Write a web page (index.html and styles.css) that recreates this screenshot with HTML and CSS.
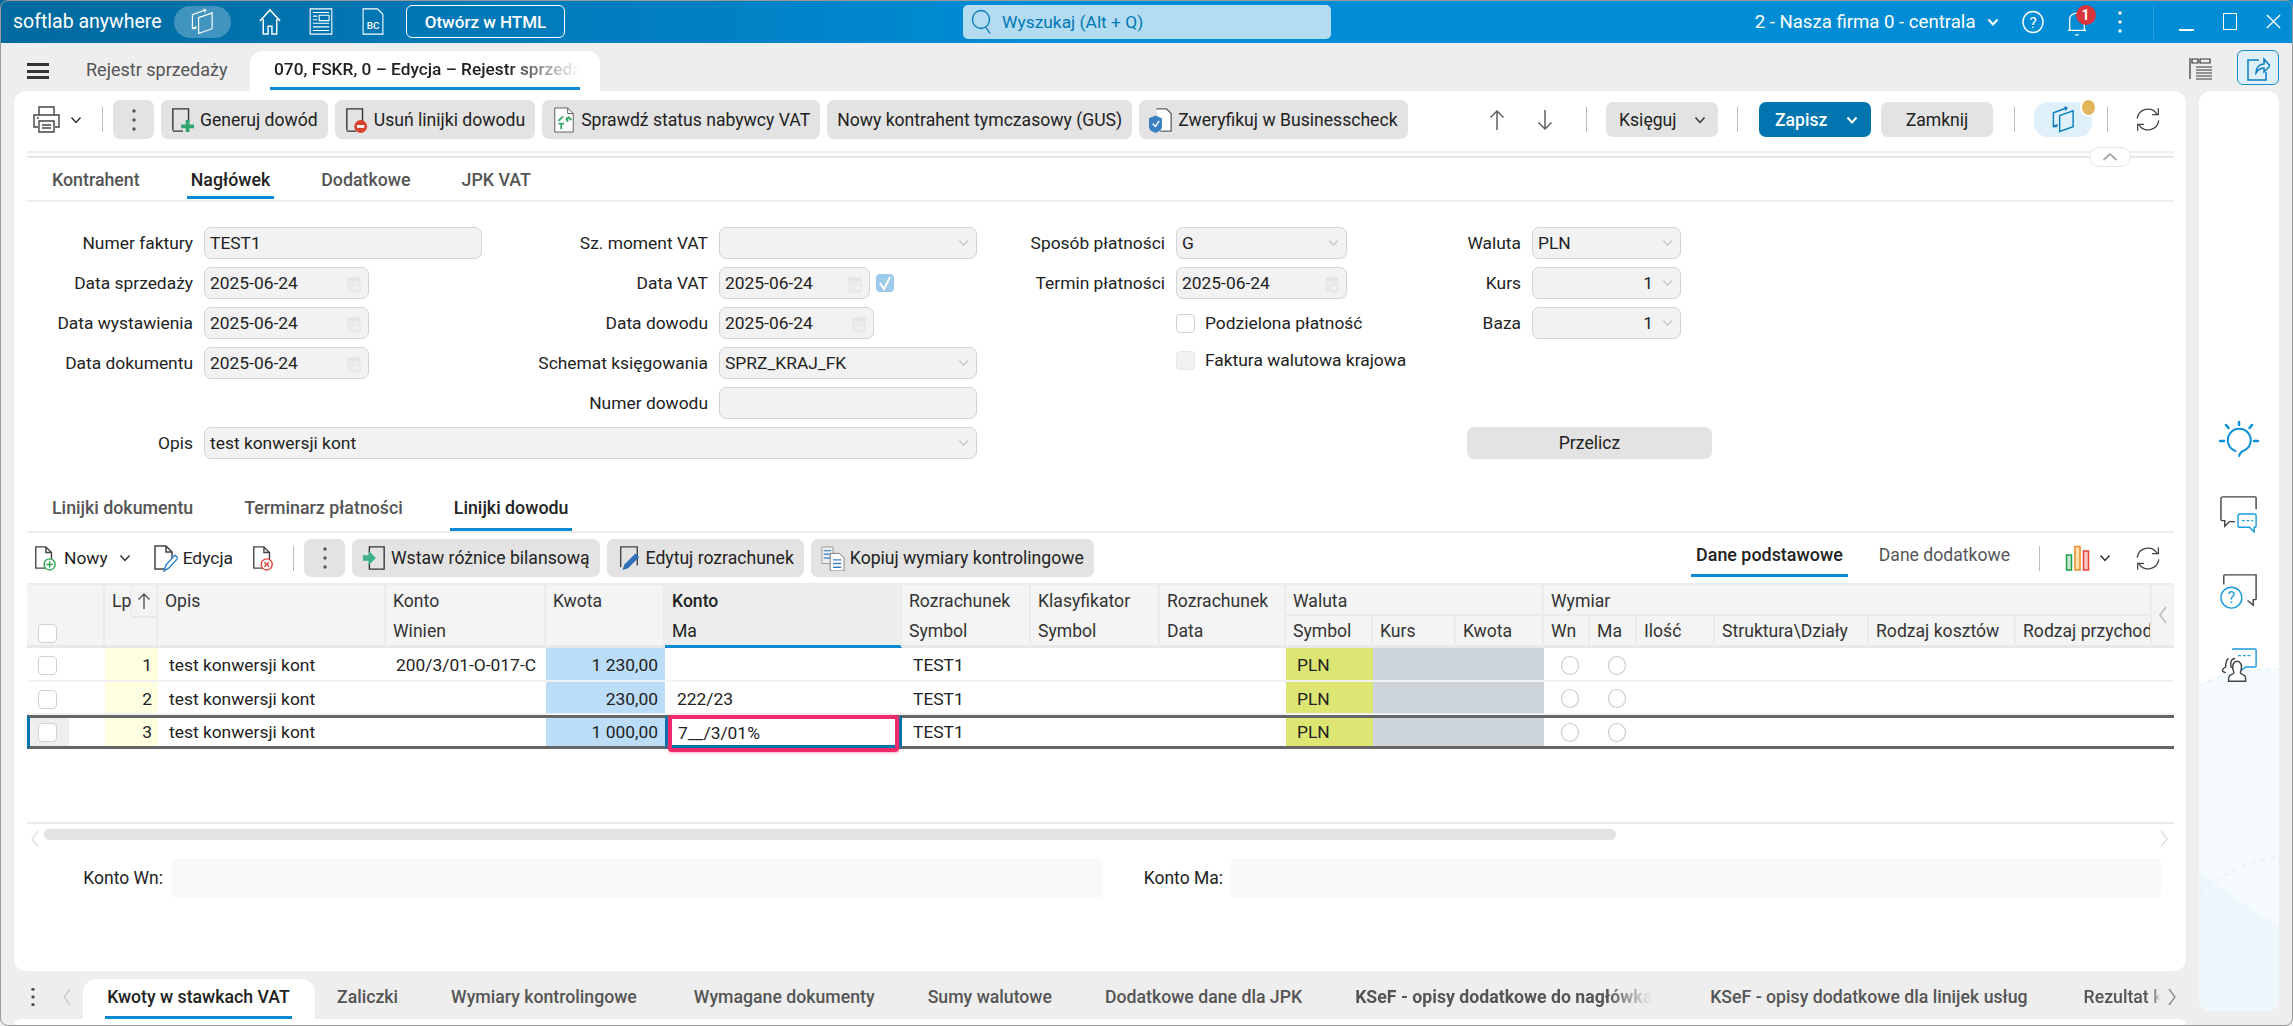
FILE: index.html
```html
<!DOCTYPE html>
<html lang="pl">
<head>
<meta charset="utf-8">
<title>Rejestr sprzedaży</title>
<link rel="stylesheet" href="styles.css">
</head>
<body>
<svg class="defs" aria-hidden="true">
  <symbol id="logo" viewBox="0 0 26 28"><path d="M9 10 23 5V21.500L9 26.500Z M16 2 2.500 7V21L7 19.500 M2 18l1 3.500 3.500-.5 M14 1l2.500 1-1.500 2.500"/></symbol>
  <symbol id="refresh" viewBox="0 0 30 30"><path d="M3 14A12 12 0 0 1 25 9 M26.500 2.500v7h-7 M27 16A12 12 0 0 1 5 21 M3.500 27.500v-7h7"/></symbol>
  <symbol id="chev" viewBox="0 0 12 8"><path d="M1.500 1.500 6 6.500l4.500-5"/></symbol>
  <symbol id="cal" viewBox="0 0 14 18"><path d="M1 3h12v14H1z" fill="#ebebeb" stroke="#e6e6e6"/><path d="M1 3h12v3H1z" fill="#e4e4e4"/><path d="M9 12h2v2H9z" fill="#fff"/></symbol>
  <symbol id="kebab" viewBox="0 0 6 24"><circle cx="3" cy="3" r="1.700"/><circle cx="3" cy="12" r="1.700"/><circle cx="3" cy="21" r="1.700"/></symbol>
  <symbol id="doc" viewBox="0 0 26 28"><path d="M15 25H3V2h11l6 6v8 M14 2v6h6" fill="none" stroke="#444" stroke-width="1.500"/></symbol>
</svg>
<div class="app">
  <header class="titlebar">
    <div class="tb-left">
      <span class="brand">softlab anywhere</span>
      <span class="logo-pill"><svg class="ic-logo-w"><use href="#logo"/></svg></span>
      <svg class="tb-home" viewBox="0 0 24 28"><path d="M1.500 13.500 12 2l10.500 11.500M5 11.500V27h5v-8h4v8h5V11.500"/></svg>
      <svg class="tb-news" viewBox="0 0 26 30"><path d="M1 1h24v28H1zM4 5h18M4 9h5M4 13h5M4 17h18M4 21h18M4 25h18M11 8h11v6H11z"/></svg>
      <svg class="tb-bc" viewBox="0 0 24 30"><path d="M17 1H1v28h22V7z"/><text x="12" y="23" text-anchor="middle" class="bc-text">BC</text></svg>
      <button class="open-html">Otwórz w HTML</button>
    </div>
    <div class="search">
      <svg class="search-ic" viewBox="0 0 22 26"><ellipse cx="10" cy="11" rx="8.500" ry="9"/><path d="M15 19l4 6"/></svg>
      <span>Wyszukaj (Alt + Q)</span>
    </div>
    <div class="tb-right">
      <div class="company"><span>2 - Nasza firma 0 - centrala</span><svg class="chev-w"><use href="#chev"/></svg></div>
      <span class="slot"><svg class="help" viewBox="0 0 22 24"><ellipse cx="11" cy="12" rx="10" ry="10.500"/><text x="11" y="17.500" text-anchor="middle">?</text></svg></span>
      <span class="slot bell-slot"><svg class="bell" viewBox="0 0 22 28"><path d="M3 21V8a8 6 0 0 1 16 0v13M1 21h20M9 26h4"/></svg><b class="badge">1</b></span>
      <span class="slot"><svg class="kebab-w"><use href="#kebab"/></svg></span>
      <span class="tb-sep"></span>
      <span class="slot"><i class="win-min"></i></span>
      <span class="slot"><i class="win-max"></i></span>
      <span class="slot"><svg class="win-close" viewBox="0 0 16 16"><path d="M1 1l14 14M15 1 1 15"/></svg></span>
    </div>
  </header>

  <nav class="pagebar">
    <span class="burger"><i></i><i></i><i></i></span>
    <span class="page-tab">Rejestr sprzedaży</span>
    <div class="page-tab-active"><span class="page-tab-inner"><span class="fade">070, FSKR, 0 – Edycja – Rejestr sprzedaży</span></span></div>
    <svg class="list-ic" viewBox="0 0 24 24"><path d="M1 1v21M3 2h6v4H3zM11 2h10v4H11zM7 10h16M7 13h16M7 16h16M7 19h16M7 22h16"/></svg>
    <span class="share"><svg viewBox="0 0 24 26"><path d="M13 5H2v20h18v-8M10 18c0-6 4-9 8-9V4l6 7-6 6v-4c-4 0-6 2-8 5z"/></svg></span>
  </nav>

  <div class="workspace">
    <div class="left">
      <main class="card">
        <div class="toolbar">
          <svg class="printer" viewBox="0 0 27 27"><path d="M6 9V1h15v8M5 21H1V9h25v12h-4M6 15h15v11H6zM9 19h9M9 22h9M4 12h2" /></svg>
          <svg class="chev-d mini-chev"><use href="#chev"/></svg>
          <span class="sep sep-1"></span>
          <button class="btn btn-kebab"><svg class="kebab-d"><use href="#kebab"/></svg></button>
          <button class="btn"><svg class="ic" viewBox="0 0 26 28"><path d="M2 25V2h17v14M2 26h11" fill="none" stroke="#333" stroke-width="1.500"/><path d="M16 15h4v5h5v4h-5v4h-4v-4h-5v-4h5z" fill="#2fa66f" transform="translate(0 -1)"/></svg>Generuj dowód</button>
          <button class="btn"><svg class="ic" viewBox="0 0 26 28"><path d="M2 25V2h17v13M2 26h10" fill="none" stroke="#333" stroke-width="1.500"/><circle cx="17" cy="21" r="7" fill="#d8432f"/><path d="M13 19.500h8v3h-8z" fill="#fff"/></svg>Usuń linijki dowodu</button>
          <button class="btn"><svg class="ic" viewBox="0 0 26 28"><path d="M3 27V1h14l6 6v20z" fill="#fff" stroke="#555"/><path d="M17 1v6h6" fill="none" stroke="#555"/><path d="M7 15l5-5M16 11l1 5 M10 24v-6 M7 18h6 M15 14l3-3 3 3" fill="none" stroke="#3aa76d" stroke-width="2"/></svg>Sprawdź status nabywcy VAT</button>
          <button class="btn">Nowy kontrahent tymczasowy (GUS)</button>
          <button class="btn"><svg class="ic" viewBox="0 0 26 28"><path d="M8 2h11l5 5v19H12" fill="#fff" stroke="#666" stroke-width="1.500"/><path d="M7 9l7 3v9c0 4-4 6-7 7-3-1-7-3-7-7v-9z" fill="#3a7fbf"/><path d="M4 18l3 3 4-6" fill="none" stroke="#fff" stroke-width="1.500"/></svg>Zweryfikuj w Businesscheck</button>
          <div class="toolbar-right">
            <svg class="arrow" viewBox="0 0 16 22"><path d="M8 21V2M1.500 8.500 8 2l6.500 6.500"/></svg>
            <svg class="arrow arrow-down" viewBox="0 0 16 22"><path d="M8 1v19M1.500 13.500 8 20l6.500-6.500"/></svg>
            <span class="sep sep-a"></span>
            <button class="btn btn-split">Księguj<svg class="chev-d"><use href="#chev"/></svg></button>
            <span class="sep sep-b"></span>
            <button class="btn btn-primary">Zapisz<svg class="chev-w"><use href="#chev"/></svg></button>
            <button class="btn btn-wide">Zamknij</button>
            <span class="sep sep-c"></span>
            <span class="logo-blue"><svg class="ic-logo-b"><use href="#logo"/></svg><i class="dot"></i></span>
            <span class="sep sep-d"></span>
            <svg class="refresh"><use href="#refresh"/></svg>
          </div>
        </div>
        <div class="rule"><span class="collapse"><svg viewBox="0 0 16 10"><path d="M1.500 8 8 2l6.500 6"/></svg></span></div>

        <div class="tabs tabs-top">
          <span class="tab">Kontrahent</span>
          <span class="tab tab-on">Nagłówek</span>
          <span class="tab">Dodatkowe</span>
          <span class="tab">JPK VAT</span>
        </div>

        <form class="form">
          <label class="lbl">Numer faktury</label><div class="inp inp-w">TEST1</div>
          <label class="lbl">Sz. moment VAT</label><div class="inp inp-sel"><svg class="sel-chev"><use href="#chev"/></svg></div>
          <label class="lbl">Sposób płatności</label><div class="inp inp-sel">G<svg class="sel-chev"><use href="#chev"/></svg></div>
          <label class="lbl">Waluta</label><div class="inp inp-sel">PLN<svg class="sel-chev"><use href="#chev"/></svg></div>

          <label class="lbl">Data sprzedaży</label><div class="inp inp-date">2025-06-24<svg class="cal"><use href="#cal"/></svg></div>
          <label class="lbl">Data VAT</label>
          <div class="vat-cell"><div class="inp inp-date-v">2025-06-24<svg class="cal"><use href="#cal"/></svg></div><span class="chk-on"><svg viewBox="0 0 14 16"><path d="M2 8l4 6 6-12"/></svg></span></div>
          <label class="lbl">Termin płatności</label><div class="inp inp-sel">2025-06-24<svg class="cal"><use href="#cal"/></svg></div>
          <label class="lbl">Kurs</label><div class="inp inp-sel inp-num">1<svg class="sel-chev"><use href="#chev"/></svg></div>

          <label class="lbl">Data wystawienia</label><div class="inp inp-date">2025-06-24<svg class="cal"><use href="#cal"/></svg></div>
          <label class="lbl">Data dowodu</label><div class="inp inp-date-d">2025-06-24<svg class="cal"><use href="#cal"/></svg></div>
          <span></span><div class="chk-row"><span class="chk"></span>Podzielona płatność</div>
          <label class="lbl">Baza</label><div class="inp inp-sel inp-num">1<svg class="sel-chev"><use href="#chev"/></svg></div>

          <label class="lbl">Data dokumentu</label><div class="inp inp-date">2025-06-24<svg class="cal"><use href="#cal"/></svg></div>
          <label class="lbl">Schemat księgowania</label><div class="inp inp-sel">SPRZ_KRAJ_FK<svg class="sel-chev"><use href="#chev"/></svg></div>
          <span></span><div class="chk-row chk-row-up"><span class="chk chk-dis"></span>Faktura walutowa krajowa</div>
          <span></span><span></span>

          <span></span><span></span>
          <label class="lbl">Numer dowodu</label><div class="inp"></div>
          <span></span><span></span><span></span><span></span>

          <label class="lbl">Opis</label><div class="inp inp-sel inp-span">test konwersji kont<svg class="sel-chev"><use href="#chev"/></svg></div>
          <span></span><span></span>
          <button type="button" class="btn przelicz">Przelicz</button>
        </form>

        <div class="tabs tabs-low">
          <span class="tab">Linijki dokumentu</span>
          <span class="tab">Terminarz płatności</span>
          <span class="tab tab-on">Linijki dowodu</span>
        </div>

        <div class="toolbar toolbar-low">
          <svg class="ic-n" viewBox="0 0 26 28"><use href="#doc"/><circle cx="18" cy="21" r="6" fill="#fff" stroke="#2aa84f" stroke-width="1.500"/><path d="M18 17.500v7M14.500 21h7" stroke="#2aa84f" stroke-width="1.500"/></svg>
          <span class="plain plain-n">Nowy</span>
          <svg class="chev-d mini-chev-2"><use href="#chev"/></svg>
          <svg class="ic-e" viewBox="0 0 26 28"><use href="#doc"/><path d="M12 27l2-6L23 11l3 3-9 10z" fill="#fff" stroke="#3b87c9" stroke-width="1.500"/></svg>
          <span class="plain plain-e">Edycja</span>
          <svg class="ic-x" viewBox="0 0 26 28"><use href="#doc"/><circle cx="17" cy="21" r="6" fill="#fff" stroke="#e0433a" stroke-width="1.500"/><path d="M14.500 18.500l5 5M19.500 18.500l-5 5" stroke="#e0433a" stroke-width="1.500"/></svg>
          <span class="sep sep-2"></span>
          <button class="btn btn-kebab btn-kebab-low"><svg class="kebab-d"><use href="#kebab"/></svg></button>
          <button class="btn"><svg class="ic" viewBox="0 0 26 28"><path d="M8 8V2h16v24H8v-6" fill="none" stroke="#333" stroke-width="1.500"/><path d="M1 11h6V6l8 8-8 8v-5H1z" fill="#3fb08a"/></svg>Wstaw różnice bilansową</button>
          <button class="btn"><svg class="ic" viewBox="0 0 26 28"><path d="M4 24V2h18v20" fill="none" stroke="#444" stroke-width="1.500"/><path d="M6 27l2-6L20 9l4 4-12 12z" fill="#2f6fb8"/></svg>Edytuj rozrachunek</button>
          <button class="btn"><svg class="ic" viewBox="0 0 26 28"><path d="M1 2h12v18H1z" fill="#eee" stroke="#999"/><path d="M3 6h8M3 10h8M3 14h8" stroke="#4a90d0" stroke-width="1.500"/><path d="M10 9h10l5 5v14H10z" fill="#fff" stroke="#777"/><path d="M13 16h9M13 20h9M13 24h9" stroke="#3a80c8" stroke-width="1.500"/></svg>Kopiuj wymiary kontrolingowe</button>
          <div class="toolbar-right">
            <span class="view-tab view-on">Dane podstawowe</span>
            <span class="view-tab">Dane dodatkowe</span>
            <span class="sep sep-e"></span>
            <svg class="chart" viewBox="0 0 26 26"><path d="M1.500 10h5v15h-5z" fill="#c9e6cf" stroke="#1fa14a" stroke-width="1.500"/><path d="M10 1.500h5V25h-5z" fill="#fbe0b0" stroke="#ee8a25" stroke-width="1.500"/><path d="M18.500 6h5v19h-5z" fill="#f8c9c9" stroke="#e5403a" stroke-width="1.500"/></svg>
            <svg class="chev-d mini-chev-3"><use href="#chev"/></svg>
            <svg class="refresh refresh-low"><use href="#refresh"/></svg>
          </div>
        </div>

        <table class="grid">
          <colgroup>
            <col class="c42"><col class="c36"><col class="c53"><col class="c228"><col class="c160"><col class="c119"><col class="c237"><col class="c129"><col class="c129"><col class="c126"><col class="c87"><col class="c83"><col class="c88"><col class="c46"><col class="c47"><col class="c78"><col class="c154"><col class="c147"><col class="c136"><col class="c22">
          </colgroup>
          <thead>
            <tr>
              <th rowspan="2" class="th-chk"><span class="chk"></span></th>
              <th rowspan="2" class="last"></th>
              <th rowspan="2" class="th-lp last">Lp<span class="sort"><svg viewBox="0 0 14 18"><path d="M7 17V2M1.500 7.500 7 2l5.500 5.500"/></svg></span></th>
              <th rowspan="2" class="last">Opis</th>
              <th class="nob">Konto</th>
              <th rowspan="2" class="last">Kwota</th>
              <th class="nob hl"><b>Konto</b></th>
              <th class="nob">Rozrachunek</th>
              <th class="nob">Klasyfikator</th>
              <th class="nob">Rozrachunek</th>
              <th colspan="3" class="group">Waluta</th>
              <th colspan="6" class="group">Wymiar</th>
              <th rowspan="2" class="last th-more"><svg viewBox="0 0 10 20"><path d="M8 2 2 10l6 8"/></svg></th>
            </tr>
            <tr>
              <th class="last">Winien</th>
              <th class="last hl hl-on">Ma</th>
              <th class="last">Symbol</th>
              <th class="last">Symbol</th>
              <th class="last">Data</th>
              <th class="last">Symbol</th>
              <th class="last">Kurs</th>
              <th class="last">Kwota</th>
              <th class="last">Wn</th>
              <th class="last">Ma</th>
              <th class="last">Ilość</th>
              <th class="last">Struktura\Działy</th>
              <th class="last">Rodzaj kosztów</th>
              <th class="last clip">Rodzaj przychodów</th>
            </tr>
          </thead>
          <tbody>
            <tr>
              <td class="td-chk"><span class="chk"></span></td><td></td><td class="lp">1</td><td class="txt">test konwersji kont</td><td class="txt-w">200/3/01-O-017-C</td><td class="amt">1 230,00</td><td class="txt-m"></td><td class="txt-r">TEST1</td><td></td><td></td><td class="cur">PLN</td><td class="gray"></td><td class="gray"></td><td class="rad"><i class="radio"></i></td><td class="rad"><i class="radio"></i></td><td></td><td></td><td></td><td></td><td></td>
            </tr>
            <tr>
              <td class="td-chk"><span class="chk"></span></td><td></td><td class="lp">2</td><td class="txt">test konwersji kont</td><td></td><td class="amt">230,00</td><td class="txt-m">222/23</td><td class="txt-r">TEST1</td><td></td><td></td><td class="cur">PLN</td><td class="gray"></td><td class="gray"></td><td class="rad"><i class="radio"></i></td><td class="rad"><i class="radio"></i></td><td></td><td></td><td></td><td></td><td></td>
            </tr>
            <tr class="row-on">
              <td class="td-chk td-first"><span class="chk"></span></td><td></td><td class="lp">3</td><td class="txt">test konwersji kont</td><td></td><td class="amt">1 000,00</td><td class="td-edit"><div class="edit">7__/3/01%</div></td><td class="txt-r">TEST1</td><td></td><td></td><td class="cur">PLN</td><td class="gray"></td><td class="gray"></td><td class="rad"><i class="radio"></i></td><td class="rad"><i class="radio"></i></td><td></td><td></td><td></td><td></td><td></td>
            </tr>
          </tbody>
        </table>

        <div class="scrollrow">
          <svg class="sc-chev" viewBox="0 0 10 20"><path d="M8 2 2 10l6 8"/></svg>
          <span class="thumb"></span>
          <svg class="sc-chev sc-chev-r" viewBox="0 0 10 20"><path d="M2 2l6 8-6 8"/></svg>
        </div>

        <div class="konto">
          <span class="konto-l">Konto Wn:</span><span class="konto-f"></span>
          <span class="konto-l konto-l2">Konto Ma:</span><span class="konto-f"></span>
        </div>
      </main>

      <div class="bottombar">
        <svg class="kebab-b"><use href="#kebab"/></svg>
        <svg class="bt-chev" viewBox="0 0 10 20"><path d="M8 2 2 10l6 8"/></svg>
        <span class="bt bt-on"><span class="bt-inner">Kwoty w stawkach VAT</span></span>
        <span class="bt">Zaliczki</span>
        <span class="bt">Wymiary kontrolingowe</span>
        <span class="bt bt-wide">Wymagane dokumenty</span>
        <span class="bt">Sumy walutowe</span>
        <span class="bt">Dodatkowe dane dla JPK</span>
        <span class="bt bt-b"><span class="fade fade-b">KSeF - opisy dodatkowe do nagłówka</span></span>
        <span class="bt bt-far">KSeF - opisy dodatkowe dla linijek usług</span>
        <span class="bt bt-clip">Rezultat księgowania</span>
        <svg class="bt-chev bt-chev-r" viewBox="0 0 10 20"><path d="M2 2l6 8-6 8"/></svg>
      </div>
      <div class="sliver"></div>
    </div>

    <aside class="side">
      <svg class="deco" viewBox="0 0 80 350" preserveAspectRatio="none"><path d="M0 25Q30 8 80 8V350H0Z" fill="#f6fbfe"/><path d="M0 210Q40 240 80 265V350H0Z" fill="#eef7fc"/><path d="M0 25Q30 8 80 8M0 232Q40 200 80 196" fill="none" stroke="#d5ebf8" stroke-dasharray="5 5"/></svg>
      <svg class="side-ic si-bulb" viewBox="0 0 40 38"><g fill="none" stroke="#0a90d8" stroke-width="2" stroke-linecap="round"><path d="M16.500 30A11.500 11.500 0 1 1 24 30c-1.500.5-3 2-4 5"/><path d="M20 1v3M7 4l2.500 3M33 4l-2.500 3M1 20h4M35 20h4" stroke-width="2.500"/></g></svg>
      <svg class="side-ic si-chat" viewBox="0 0 40 40"><g fill="none" stroke-width="1.500"><path d="M38 15V3q0-1-1-1H3Q1 2 1 4v22q0 1 2 1h2v6l5-5h6" stroke="#444"/><path d="M19 22q0-2 2-2h15q2 0 2 2v10q0 2-2 2v5l-5-5H21q-2 0-2-2z" stroke="#1b9bdc" fill="#fff"/><path d="M23 27h12" stroke="#1b9bdc" stroke-dasharray="3 2"/></g></svg>
      <svg class="side-ic si-help" viewBox="0 0 40 40"><g fill="none" stroke-width="1.500"><path d="M4 12V3q0-1 1-1h33v25q0 1-1 1h-2v6l-6-5" stroke="#444"/><circle cx="12" cy="26" r="11" stroke="#1b9bdc" fill="#fff"/><text x="12" y="32" text-anchor="middle" class="q">?</text></g></svg>
      <svg class="side-ic si-ppl" viewBox="0 0 40 40"><g fill="none" stroke-width="1.500"><path d="M13 2q0-1 1-1h23q1 0 1 1v17q0 1-1 1H27l-5 4v-4" stroke="#1b9bdc"/><path d="M19 8h14" stroke="#1b9bdc" stroke-dasharray="3 2"/><path d="M12 21c-2-6 0-10 4-10M6 26c-4-1-5-3 0-6 0-4 0-7 3-9" stroke="#444" fill="none"/><path d="M14 24c-2-7 1-10 4-10s6 3 4 10c-1 2-1 3 2 4 3 1 3 3 3 7H9c0-4 0-6 3-7 3-1 3-2 2-4z" stroke="#444" fill="#fff"/></g></svg>
    </aside>
  </div>
</div>
</body>
</html>
```

FILE: styles.css
```css
* { box-sizing: border-box; }
html, body { margin: 0; padding: 0; background: #fff; }
body { font-family: Roboto, "Liberation Sans", sans-serif; font-size: 17.4px; color: #222; }
.defs { position: absolute; width: 0; height: 0; }
svg { display: block; flex: none; }
button { font: inherit; color: inherit; border: 0; }

.app { position: relative; width: 2293px; height: 1026px; overflow: hidden; background: #eee; display: flex; flex-direction: column; }
.app::after { content: ""; position: absolute; inset: 0; border: 1px solid #999; border-radius: 8px; pointer-events: none; }

/* title bar */
.titlebar { height: 43px; flex: none; display: flex; align-items: center; color: #fff; background: linear-gradient(90deg, #006a9f 0, #0082c6 33%, #008dd5 45%); }
.tb-left { width: 963px; display: flex; align-items: center; }
.brand { margin-left: 13px; width: 148px; font-size: 19.5px; white-space: nowrap; }
.logo-pill { margin-left: 13px; width: 57px; height: 32px; border-radius: 16px; background: rgba(255,255,255,.25); display: flex; align-items: center; justify-content: center; }
.ic-logo-w { width: 25px; height: 27px; fill: none; stroke: #fff; stroke-width: 1.2; }
.tb-home, .tb-news, .tb-bc { fill: none; stroke: #fff; stroke-width: 1.5; height: 27px; }
.tb-home { margin-left: 27px; width: 24px; }
.tb-news { margin-left: 26px; width: 26px; stroke-width: 1.2; }
.tb-bc { margin-left: 27px; width: 24px; stroke-width: 1.2; }
.bc-text { font-family: Roboto, sans-serif; font-size: 11px; font-weight: 500; fill: #fff; stroke: none; }
.open-html { margin-left: 21px; width: 159px; height: 33px; border: 1.5px solid #fff; border-radius: 6px; background: transparent; color: #fff; font-size: 17px; font-weight: 500; }
.search { width: 368px; height: 34px; border-radius: 5px; background: #b3dcf2; color: #0078b4; display: flex; align-items: center; gap: 9px; padding-left: 8px; }
.search-ic { width: 22px; height: 27px; fill: none; stroke: #0078b4; stroke-width: 1.3; }
.tb-right { flex: 1; display: flex; justify-content: flex-end; align-items: center; gap: 19.5px; padding-right: 8px; }
.company { display: flex; align-items: center; gap: 11px; margin-right: 3px; font-size: 18.6px; white-space: nowrap; }
.chev-w { width: 12px; height: 8px; fill: none; stroke: #fff; stroke-width: 2; }
.slot { position: relative; width: 24px; height: 30px; display: flex; align-items: center; justify-content: center; }
.help { width: 22px; height: 24px; fill: none; stroke: #fff; stroke-width: 1.4; }
.help text { fill: #fff; stroke: none; font-size: 15px; font-family: Roboto, sans-serif; }
.bell { width: 20px; height: 26px; margin-top: 5px; fill: none; stroke: #fff; stroke-width: 1.4; }
.badge { position: absolute; left: 11px; top: -2px; width: 20px; height: 20px; border-radius: 50%; background: #d8343b; color: #fff; font-size: 14px; line-height: 20px; text-align: center; }
.kebab-w { width: 6px; height: 24px; fill: #fff; }
.tb-sep { width: 1px; height: 34px; margin: 0 1px; background: #2b9fdc; }
.win-min { width: 15px; height: 2px; margin-top: 16px; background: #fff; }
.win-max { width: 14px; height: 17px; border: 1.5px solid #fff; }
.win-close { width: 15px; height: 15px; fill: none; stroke: #fff; stroke-width: 1.4; }

/* page bar */
.pagebar { height: 48px; flex: none; display: flex; align-items: flex-end; position: relative; }
.burger { margin: 0 0 12px 27px; width: 22px; height: 16px; display: flex; flex-direction: column; justify-content: space-between; }
.burger i { height: 3px; background: #333; }
.page-tab { margin: 0 0 11px 37px; width: 164px; color: #555; font-size: 18px; line-height: 20px; white-space: nowrap; }
.page-tab-active { width: 350px; height: 40px; padding: 0 20px; background: #fff; border-radius: 12px 12px 0 0; }
.page-tab-inner { display: block; height: 39px; line-height: 36px; padding-left: 4px; border-bottom: 3px solid #0a8ad2; overflow: hidden; font-size: 17.3px; font-weight: 500; white-space: nowrap; color: #222; }
.fade { display: block; width: 306px; overflow: hidden; -webkit-mask-image: linear-gradient(90deg, #000 76%, transparent 100%); mask-image: linear-gradient(90deg, #000 76%, transparent 100%); }
.list-ic { margin: 0 0 10px auto; width: 24px; height: 24px; fill: none; stroke: #333; stroke-width: 1.2; }
.share { margin: 0 14px 6px 24px; width: 42px; height: 35px; border: 1.5px solid #1a8ccc; border-radius: 6px; background: #e0f0fa; display: flex; align-items: center; justify-content: center; }
.share svg { width: 24px; height: 26px; fill: none; stroke: #0a7fc0; stroke-width: 1.5; }

/* workspace */
.workspace { flex: 1; display: flex; min-height: 0; }
.left { width: 2186px; padding-left: 14px; display: flex; flex-direction: column; }
.card { height: 880px; flex: none; background: #fff; border-radius: 12px; padding: 9px 12px 0 13px; }
.side { position: relative; overflow: hidden; margin-left: 13px; width: 80px; height: 920px; border-radius: 12px; background: #fff; display: flex; flex-direction: column; align-items: center; }
.deco { position: absolute; left: 0; bottom: 0; width: 80px; height: 350px; }
.side-ic { position: relative; width: 40px; height: 38px; }
.si-bulb { margin-top: 330px; }
.si-chat { margin-top: 36px; }
.si-help { margin-top: 40px; }
.si-ppl { margin-top: 37px; }
.q { fill: #1b9bdc; stroke: none; font-size: 17px; font-family: Roboto, sans-serif; }

/* toolbar */
.toolbar { height: 39px; display: flex; align-items: center; padding-left: 6px; }
.toolbar-right { margin-left: auto; display: flex; align-items: center; height: 100%; }
.printer { width: 27px; height: 27px; fill: none; stroke: #444; stroke-width: 1.4; }
.chev-d { width: 12px; height: 8px; fill: none; stroke: #333; stroke-width: 1.5; }
.mini-chev { margin-left: 10px; }
.sep { width: 1px; height: 25px; background: #bbb; flex: none; }
.sep-1 { margin-left: 20px; }
.btn { height: 39px; padding: 0 10px; border-radius: 7px; background: #e3e3e3; display: inline-flex; align-items: center; gap: 5px; margin-left: 7px; font-size: 17.6px; white-space: nowrap; color: #222; }
.btn-kebab { width: 41px; justify-content: center; margin-left: 10px; padding: 0; }
.kebab-d { width: 6px; height: 24px; fill: #555; }
.ic { width: 24px; height: 26px; }
.arrow { width: 16px; height: 22px; fill: none; stroke: #555; stroke-width: 1.4; }
.arrow-down { margin-left: 32px; }
.sep-a { margin-left: 33px; }
.btn-split { margin-left: 19px; width: 112px; height: 35px; padding: 0 12px 0 13px; justify-content: space-between; }
.sep-b { margin-left: 19px; }
.btn-primary { margin-left: 21px; width: 112px; height: 35px; background: #0075b0; color: #fff; padding: 0 13px 0 16px; justify-content: space-between; font-weight: 500; }
.btn-wide { margin-left: 10px; width: 112px; height: 35px; justify-content: center; }
.sep-c { margin-left: 21px; }
.logo-blue { position: relative; margin-left: 19px; width: 58px; height: 35px; border-radius: 14px; background: #e0f0fa; display: flex; align-items: center; justify-content: center; }
.ic-logo-b { width: 25px; height: 27px; fill: none; stroke: #0a7fc0; stroke-width: 1.5; }
.dot { position: absolute; right: -3px; top: -2px; width: 13px; height: 15px; border-radius: 50%; background: #e3b65c; box-shadow: 0 0 0 2px #fff; }
.sep-d { margin-left: 15px; }
.refresh { margin: 0 12px 0 26px; width: 28px; height: 27px; fill: none; stroke: #444; stroke-width: 1.4; }
.refresh-low { margin-left: 23px; }

.rule { position: relative; margin-top: 12px; height: 7px; border-top: 2px solid #eee; border-bottom: 2px solid #e6e6e6; }
.collapse { position: absolute; left: 2062px; top: -6px; width: 42px; height: 20px; border: 1px solid #e6e6e6; border-radius: 10px; background: #fff; display: flex; align-items: center; justify-content: center; }
.collapse svg { width: 16px; height: 10px; fill: none; stroke: #aaa; stroke-width: 2; }

/* tabs */
.tabs { display: flex; align-items: flex-end; gap: 43px; padding-left: 21px; border-bottom: 2px solid #eee; }
.tabs-top { height: 44px; }
.tabs-top .tab { margin-bottom: 1px; padding-bottom: 6px; }
.tabs-low { height: 66px; }
.tabs-low .tab { padding-bottom: 10px; }
.tab { padding: 0 4px 6px; line-height: 20px; color: #555; font-weight: 500; font-size: 17.8px; border-bottom: 3px solid transparent; white-space: nowrap; }
.tab-on { color: #222; border-bottom-color: #0a8ad2; }

/* form */
.form { display: grid; grid-template-columns: 177px 278px 237px 258px 199px 171px 185px 149px; grid-template-rows: repeat(6, 40px); padding-top: 25px; }
.lbl { text-align: right; padding-right: 11px; height: 32px; line-height: 32px; white-space: nowrap; color: #222; }
.inp { position: relative; height: 32px; line-height: 30px; padding-left: 5px; background: #f2f2f2; border: 1px solid #d4d4d4; border-radius: 7px; white-space: nowrap; }
.inp-w { width: 278px; }
.inp-date { width: 165px; }
.inp-date-v { width: 151px; }
.inp-date-d { width: 155px; }
.inp-span { grid-column: span 3; }
.inp-num { text-align: right; padding-right: 27px; }
.sel-chev { position: absolute; right: 7px; top: 11px; width: 11px; height: 8px; fill: none; stroke: #bbb; stroke-width: 1.2; }
.cal { position: absolute; right: 7px; top: 7px; width: 14px; height: 18px; }
.vat-cell { display: flex; gap: 6px; align-items: center; height: 32px; }
.chk-on { width: 18px; height: 18px; border-radius: 4px; background: #9bcbe8; display: flex; align-items: center; justify-content: center; }
.chk-on svg { width: 14px; height: 16px; fill: none; stroke: #fff; stroke-width: 2; }
.chk-row { display: flex; align-items: center; gap: 10px; height: 32px; white-space: nowrap; }
.chk-row-up { margin-top: -3px; }
.chk { display: inline-block; flex: none; width: 19px; height: 19px; background: #fff; border: 1.5px solid #d2d2d2; border-radius: 4px; vertical-align: middle; }
.chk-dis { background: #f2f2f2; border-color: #e6e6e6; }
.przelicz { grid-column: span 2; margin-left: 120px; width: 245px; height: 32px; justify-content: center; }

/* lower toolbar */
.toolbar-low { height: 38px; margin: 6px 0; padding-left: 6px; }
.ic-n { width: 24px; height: 28px; }
.plain { white-space: nowrap; }
.plain-n { margin-left: 7px; }
.plain-e { margin-left: 5px; }
.mini-chev-2 { margin-left: 11px; }
.ic-e { margin-left: 21px; width: 26px; height: 28px; }
.ic-x { margin-left: 18px; width: 24px; height: 28px; }
.sep-2 { margin-left: 18px; }
.toolbar-low .btn { height: 38px; }
.view-tab { height: 38px; margin-left: 26px; padding: 0 5px; line-height: 32px; color: #555; font-size: 17.6px; border-bottom: 3px solid transparent; white-space: nowrap; }
.view-on { color: #222; font-size: 17.9px; font-weight: 500; border-bottom-color: #0a8ad2; }
.sep-e { margin-left: 24px; }
.chart { margin-left: 25px; width: 26px; height: 26px; }
.mini-chev-3 { margin-left: 8px; }

/* table */
.grid { width: 2147px; table-layout: fixed; border-collapse: separate; border-spacing: 0; }
.c42 { width: 42px; } .c36 { width: 36px; } .c53 { width: 53px; } .c228 { width: 228px; } .c160 { width: 160px; } .c119 { width: 119px; } .c237 { width: 237px; } .c129 { width: 129px; } .c126 { width: 126px; } .c87 { width: 87px; } .c83 { width: 83px; } .c88 { width: 88px; } .c46 { width: 46px; } .c47 { width: 47px; } .c78 { width: 78px; } .c154 { width: 154px; } .c147 { width: 147px; } .c136 { width: 136px; } .c22 { width: 22px; }
th { background: #f4f4f4; border-right: 2px solid #ebebeb; padding: 0 0 0 7px; font-size: 17.6px; font-weight: 400; text-align: left; height: 32px; vertical-align: middle; white-space: nowrap; overflow: hidden; color: #333; }
thead tr:first-child th { height: 33px; border-top: 2px solid #ececec; vertical-align: top; padding-top: 6px; line-height: 20px; }
thead tr:last-child th { padding-top: 1px; }
th.last { border-bottom: 3px solid #e8e8e8; }
th.nob { border-bottom: 0; }
th.group { border-bottom: 2px solid #ebebeb; }
th.hl { background: #eee; color: #222; }
th.hl b { font-weight: 500; }
th.hl-on { border-bottom-color: #0a8ad2; }
.th-chk { padding: 0 0 0 11px; border-right: 0; border-bottom: 3px solid #e8e8e8; vertical-align: bottom !important; }
.th-chk .chk { margin-bottom: 2px; }
.th-lp { position: relative; }
.sort { position: absolute; right: 0; top: 0; width: 25px; height: 33px; border-left: 1px solid #e8e8e8; border-bottom: 2px solid #e8e8e8; display: flex; justify-content: center; align-items: center; }
.sort svg { width: 14px; height: 18px; fill: none; stroke: #555; stroke-width: 1.4; }
.th-more { padding: 0 0 0 6px; border-right: 0; }
.th-more svg { width: 10px; height: 20px; fill: none; stroke: #bbb; stroke-width: 1.5; margin-top: 14px; }
td { height: 34px; padding: 2px 0 0; border-bottom: 2px solid #f2f2f2; white-space: nowrap; overflow: hidden; color: #222; }
tbody tr:nth-child(2) td { height: 33px; }
.td-chk { padding-left: 11px; }
.lp { background: #fefee0; text-align: right; padding-right: 6px; }
.txt { padding-left: 11px; }
.txt-w { padding-left: 10px; }
.txt-m { padding-left: 12px; }
.txt-r { padding-left: 11px; }
.amt { background: #bbddf8; text-align: right; padding-right: 7px; }
.cur { background: #dde673; padding-left: 11px; }
.gray { background: #cdd5db; }
.rad { padding-left: 17px; }
td.rad:nth-child(15) { padding-left: 18px; }
.radio { display: block; width: 18px; height: 19px; border: 1.5px solid #c6c6c6; border-radius: 50%; }
.row-on td { height: 34px; padding-top: 0; border-top: 3px solid #666; border-bottom: 3px solid #666; }
.row-on .td-first { border-left: 3px solid #0075b0; padding-left: 8px; background: #eee; }
.td-edit { position: relative; overflow: visible !important; border-left: 3px solid #0075b0; border-right: 3px solid #0075b0; }
.edit { position: absolute; left: 0; right: 0; top: -3px; height: 37px; padding-left: 6px; line-height: 29px; background: #fff; border: 4px solid #ee2a6a; border-radius: 4px; box-shadow: inset 0 -3px 0 #0075b0, 0 1px 3px rgba(238,42,106,.4); z-index: 1; }

/* scroll */
.scrollrow { margin-top: 73px; height: 36px; border-top: 2px solid #ebebeb; display: flex; align-items: flex-start; position: relative; padding-top: 5px; }
.sc-chev { margin-left: 3px; width: 10px; height: 20px; fill: none; stroke: #ddd; stroke-width: 1.3; }
.thumb { margin-left: 4px; width: 1572px; height: 11px; border-radius: 6px; background: #e3e3e3; }
.sc-chev-r { margin-left: auto; margin-right: 5px; }

.konto { display: grid; grid-template-columns: 145px 931px 127px 931px; height: 37px; }
.konto-l { text-align: right; padding-right: 9px; line-height: 40px; font-size: 17.5px; white-space: nowrap; }
.konto-l2 { padding-right: 7px; }
.konto-f { background: #f9f9f9; border-radius: 6px; }

/* bottom tabs */
.bottombar { height: 48px; flex: none; margin-left: -14px; display: flex; align-items: flex-end; font-size: 17.7px; color: #555; white-space: nowrap; }
.kebab-b { width: 6px; height: 24px; margin: 0 0 10px 30px; fill: #444; transform: scale(1, .85); }
.bt-chev { width: 10px; height: 20px; margin: 0 0 12px 26px; fill: none; stroke: #ccc; stroke-width: 1.3; }
.bt-chev-r { margin-left: auto; margin-right: 9px; stroke: #888; }
.bt { margin: 0 0 12px 53px; line-height: 20px; font-weight: 500; color: #555; }
.bt-on { margin: 0 0 0 11px; width: 232px; height: 40px; padding: 0 23px 0 22px; background: #fff; border-radius: 14px 14px 0 0; color: #222; }
.bt-inner { display: block; height: 40px; line-height: 37px; border-bottom: 3px solid #0a8ad2; text-align: center; margin: 0; }
.bt-on + .bt { margin-left: 22px; }
.bt-wide { margin-left: 57px; }
.bt-far { margin-left: 58px; }
.bt-b { font-weight: 700; }
.fade-b { width: auto; -webkit-mask-image: linear-gradient(90deg, #000 85%, transparent 100%); mask-image: linear-gradient(90deg, #000 85%, transparent 100%); }
.bt-clip { margin-left: 56px; width: 76px; overflow: hidden; -webkit-mask-image: linear-gradient(90deg, #000 90%, transparent 100%); mask-image: linear-gradient(90deg, #000 90%, transparent 100%); }
.sliver { flex: 1; background: #fff; border-radius: 10px 10px 0 0; }
```
